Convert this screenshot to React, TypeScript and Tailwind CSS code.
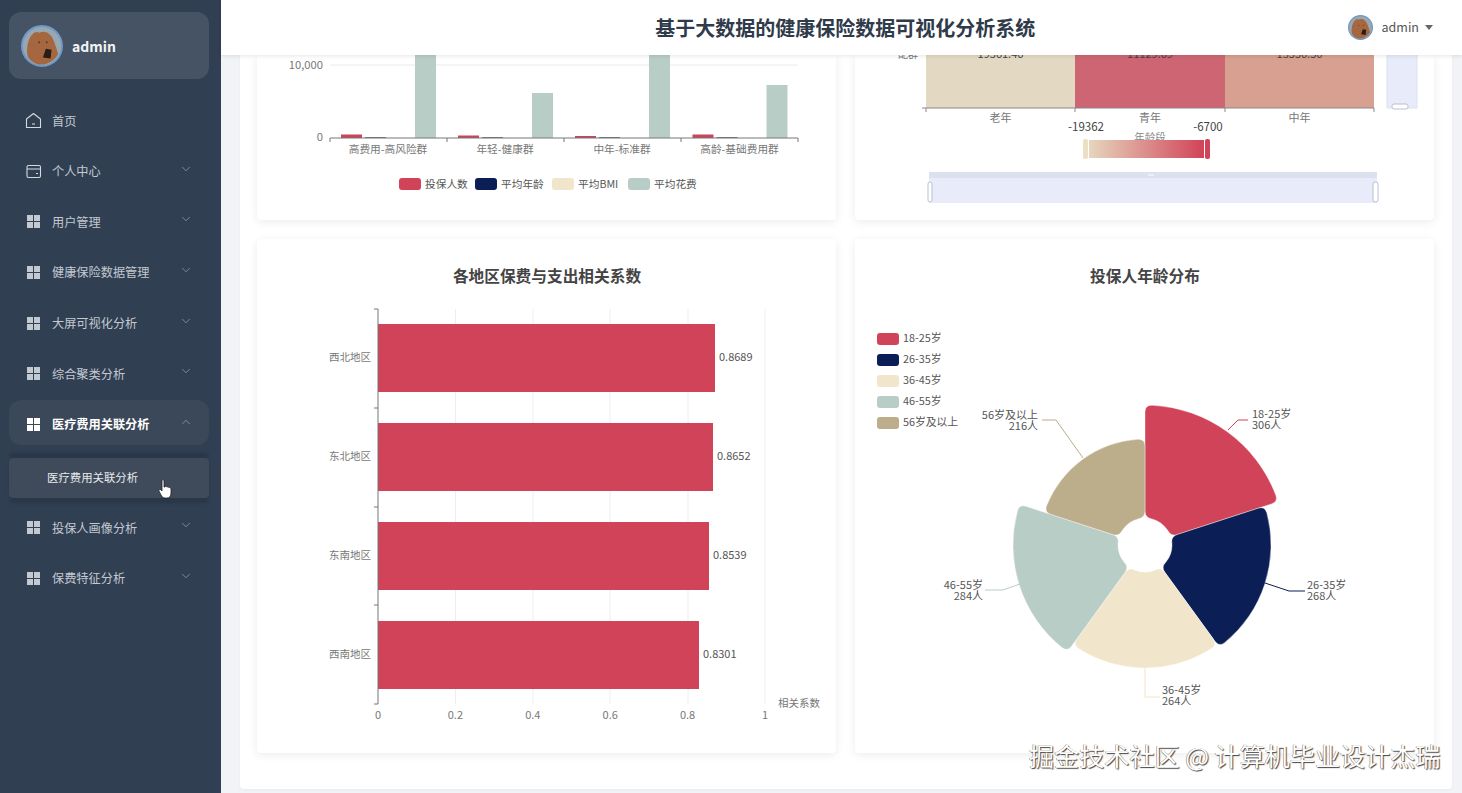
import { ChevronDown, ChevronUp } from "lucide-react";

const FONT = "'Noto Sans CJK SC', 'Noto Sans', sans-serif";

const menu = [
  { label: "首页", icon: "home" },
  { label: "个人中心", icon: "card", arrow: true },
  { label: "用户管理", arrow: true },
  { label: "健康保险数据管理", arrow: true },
  { label: "大屏可视化分析", arrow: true },
  { label: "综合聚类分析", arrow: true },
  { label: "医疗费用关联分析", arrow: true, open: true },
  { label: "投保人画像分析", arrow: true },
  { label: "保费特征分析", arrow: true },
];

function polar(r: number, deg: number) {
  const a = (deg * Math.PI) / 180;
  return [1145 - 855 + r * Math.sin(a), 306 + -r * Math.cos(a)];
}

function sector(r0: number, r: number, a0: number, a1: number, c: number) {
  const d = (c / r) * (180 / Math.PI);
  const d0 = (c / r0) * (180 / Math.PI);
  const p = (rr: number, aa: number) => polar(rr, aa).map((n) => n.toFixed(2)).join(" ");
  return [
    `M ${p(r0 + c, a0)}`,
    `L ${p(r - c, a0)}`,
    `Q ${p(r, a0)} ${p(r, a0 + d)}`,
    `A ${r} ${r} 0 0 1 ${p(r, a1 - d)}`,
    `Q ${p(r, a1)} ${p(r - c, a1)}`,
    `L ${p(r0 + c, a1)}`,
    `Q ${p(r0, a1)} ${p(r0, a1 - d0)}`,
    `A ${r0} ${r0} 0 0 0 ${p(r0, a0 + d0)}`,
    `Q ${p(r0, a0)} ${p(r0 + c, a0)}`,
    "Z",
  ].join(" ");
}

function Bear({ size }: { size: number }) {
  return (
    <svg width={size} height={size} viewBox="0 0 44 44">
      <circle cx="22" cy="22" r="21" fill="#9aa6b0" stroke="#6a9aca" strokeWidth="2" />
      <path
        d="M7 33 C5 24 8 13 12 10 C14 7 17 7 19 8 C23 6 28 7 30 10 C34 13 36 22 39 30 C35 38 27 41.5 21 41.5 C15 41.5 10 38 7 33 Z"
        fill="#a5673f"
      />
      <path d="M23 34 L26 25 L32 26 L31 35 Z" fill="#2a1d18" />
      <circle cx="19" cy="18" r="1" fill="#5c3520" />
      <circle cx="27" cy="18" r="1" fill="#5c3520" />
    </svg>
  );
}

function MenuIcon({ name }: { name?: string }) {
  if (name === "home") {
    return (
      <svg width="17" height="17" viewBox="0 0 17 17" fill="none" stroke="#d5d9de" strokeWidth="1.1" className="mr-[10px]">
        <path d="M8.5 1.5 L15.5 7 V15.5 H1.5 V7 Z" strokeLinejoin="round" />
        <path d="M7 12 H10" />
      </svg>
    );
  }
  if (name === "card") {
    return (
      <svg width="17" height="15" viewBox="0 0 17 15" fill="none" stroke="#d5d9de" strokeWidth="1.1" className="mr-[10px]">
        <rect x="2" y="1.5" width="13.5" height="12" rx="1.5" />
        <path d="M2 5 H15.5 M11 9.5 H13" />
      </svg>
    );
  }
  return (
    <svg width="17" height="13" viewBox="0 0 17 13" fill="currentColor" className="mr-[10px]">
      <rect x="2" y="0" width="6" height="6" />
      <rect x="9" y="0" width="6" height="6" />
      <rect x="2" y="7" width="6" height="6" />
      <rect x="9" y="7" width="6" height="6" />
    </svg>
  );
}

function Sidebar() {
  return (
    <aside className="w-[221px] shrink-0 bg-[#313f53] pl-[9px] pr-3 pt-3">
      <div className="mb-[16.4px] flex h-[67px] items-center gap-[9px] rounded-xl bg-[#465364] pl-3">
        <Bear size={42} />
        <span className="text-sm font-bold text-[#f1f3f5]">admin</span>
      </div>
      <nav>
        {menu.map((m) => (
          <div key={m.label}>
            <div className={`relative flex h-[50.6px] items-center ${m.open ? "isolate" : ""}`}>
              {m.open && <div className="absolute inset-x-0 bottom-[5px] top-[1px] -z-10 rounded-xl bg-[#3b4859]" />}
              <div
                className={`flex h-full w-full items-center pl-4 pr-4 ${
                  m.open ? "font-bold text-white" : "text-[#c3c9d1]"
                }`}
              >
                <MenuIcon name={m.icon} />
                <span className="flex-1 text-[12.2px]">{m.label}</span>
                {m.arrow &&
                  (m.open ? (
                    <ChevronUp size={14} className="mb-[5px] text-[#aab2bc]" strokeWidth={1.1} />
                  ) : (
                    <ChevronDown size={14} className="mb-[5px] text-[#aab2bc]" strokeWidth={1.1} />
                  ))}
              </div>
            </div>
            {m.open && (
              <div className="relative mb-[4.5px] mt-[8.5px] flex h-10 items-center rounded-sm bg-[#3f4a5a] pl-[38px] text-[11.4px] text-[#e8eaed] shadow-[0_-6px_3px_-1px_#2a3749,0_6px_3px_-1px_#2a3749]">
                医疗费用关联分析
                <svg className="absolute left-[149px] top-[21px]" width="14" height="20" viewBox="0 0 14 20">
                  <path
                    d="M4 1.5 C4 .6 6 .6 6 1.5 V8 L7 8 C7.5 6.8 9 7 9 8.2 C9.6 7.4 11 7.6 11 8.8 C11.8 8.2 13 8.6 13 10 V14 C13 17 11.5 19 9 19 H7 C5 19 4 17.6 3 16 L1 12 C.4 10.6 2 9.8 3 11 L4 12 Z"
                    fill="#fff"
                    stroke="#222"
                    strokeWidth="0.8"
                  />
                </svg>
              </div>
            )}
          </div>
        ))}
      </nav>
    </aside>
  );
}

function GroupChart() {
  const groups = [
    { x: 0, name: "高费用-高风险群", red: 3.5, sage: 90 },
    { x: 117, name: "年轻-健康群", red: 2.5, sage: 45 },
    { x: 234, name: "中年-标准群", red: 2, sage: 90 },
    { x: 351.5, name: "高龄-基础费用群", red: 3.5, sage: 53 },
  ];
  const legend = [
    { x: 142, c: "#d14358", t: "投保人数" },
    { x: 218, c: "#0b1f56", t: "平均年龄" },
    { x: 295, c: "#f1e6cb", t: "平均BMI" },
    { x: 371, c: "#b9cdc7", t: "平均花费" },
  ];
  return (
    <svg width="579" height="165" viewBox="0 55 579 165" style={{ fontFamily: FONT }} className="block">
      <line x1="73" x2="541" y1="65" y2="65" stroke="#e8eaec" />
      <text x="66" y="69" fontSize="11.2" fill="#777" textAnchor="end">10,000</text>
      <text x="66" y="141" fontSize="11.2" fill="#777" textAnchor="end">0</text>
      {groups.map((g) => (
        <g key={g.name}>
          <rect x={84 + g.x} y={138 - g.red} width="21" height={g.red} fill="#c9455a" />
          <rect x={108 + g.x} y="137" width="21" height="1" fill="#6b7280" />
          <rect x={158 + g.x} y={138 - g.sage} width="21" height={g.sage} fill="#b9cdc7" />
          <text x={131 + g.x} y="153" fontSize="10.7" fill="#777" textAnchor="middle">{g.name}</text>
        </g>
      ))}
      <line x1="73" x2="541" y1="138" y2="138" stroke="#777" />
      {[73, 190, 307, 424, 541].map((x) => (
        <line key={x} x1={x} x2={x} y1="138" y2="142" stroke="#777" />
      ))}
      {legend.map((l) => (
        <g key={l.t}>
          <rect x={l.x} y="178" width="22" height="12" rx="3" fill={l.c} />
          <text x={l.x + 26} y="187.5" fontSize="10.7" fill="#555">{l.t}</text>
        </g>
      ))}
    </svg>
  );
}

function HeatChart() {
  const cells = [
    { x: 71, w: 149, c: "#e3d8c2", v: "19361.46", l: "老年" },
    { x: 220, w: 150, c: "#cd6672", v: "11129.69", l: "青年" },
    { x: 370, w: 149, c: "#d8a090", v: "13556.56", l: "中年" },
  ];
  return (
    <svg width="579" height="165" viewBox="0 55 579 165" style={{ fontFamily: FONT }} className="block">
      <defs>
        <linearGradient id="heat" x1="0" x2="1" y1="0" y2="0">
          <stop offset="0" stopColor="#e6d6bd" />
          <stop offset="1" stopColor="#d14358" />
        </linearGradient>
      </defs>
      <text x="53" y="58" fontSize="10" fill="#777" textAnchor="middle">配群</text>
      {cells.map((c) => (
        <g key={c.l}>
          <rect x={c.x} y="40" width={c.w} height="68" fill={c.c} />
          <text x={c.x + c.w / 2} y="58" fontSize="11" fill="#444" textAnchor="middle">{c.v}</text>
          <text x={c.x + c.w / 2} y="122" fontSize="11" fill="#777" textAnchor="middle">{c.l}</text>
        </g>
      ))}
      <line x1="67" x2="519" y1="108" y2="108" stroke="#888" />
      {[71, 220, 370, 519].map((x) => (
        <line key={x} x1={x} x2={x} y1="108" y2="112" stroke="#888" />
      ))}
      <rect x="532" y="40" width="30" height="68" fill="#e8ecfa" stroke="#dde2f0" />
      <rect x="537" y="104" width="16" height="5" rx="2" fill="#fff" stroke="#b8c0d0" />
      <text x="231" y="131" fontSize="11.5" fill="#444" textAnchor="middle">-19362</text>
      <text x="353" y="131" fontSize="11.5" fill="#444" textAnchor="middle">-6700</text>
      <text x="295" y="141" fontSize="10.5" fill="#888" textAnchor="middle">年龄段</text>
      <rect x="234" y="140" width="115" height="18" fill="url(#heat)" />
      <rect x="228" y="139" width="5" height="20" rx="2" fill="#ebe0c6" />
      <rect x="350" y="139" width="5" height="20" rx="2" fill="#d14358" />
      <rect x="74" y="172" width="448" height="31" fill="#e8ebfa" />
      <rect x="74" y="172" width="448" height="6" fill="#dde1ef" />
      <rect x="293" y="174" width="6" height="2" fill="#eef0f7" />
      <rect x="73" y="182" width="4" height="20" rx="2" fill="#fff" stroke="#b8c0d0" />
      <rect x="518" y="182" width="5" height="20" rx="2" fill="#fff" stroke="#b8c0d0" />
    </svg>
  );
}

function BarChart() {
  const bars = [
    { y: 85, x2: 458, n: "西北地区", v: "0.8689" },
    { y: 184, x2: 456, n: "东北地区", v: "0.8652" },
    { y: 283, x2: 452, n: "东南地区", v: "0.8539" },
    { y: 382, x2: 442, n: "西南地区", v: "0.8301" },
  ];
  return (
    <svg width="579" height="514" style={{ fontFamily: FONT }} className="block">
      <text x="290" y="43" fontSize="15.7" fontWeight="700" fill="#444" textAnchor="middle">
        各地区保费与支出相关系数
      </text>
      {[198.5, 276, 353, 431, 508].map((x) => (
        <line key={x} x1={x} x2={x} y1="70" y2="465" stroke="#eceef0" />
      ))}
      {bars.map((b) => (
        <g key={b.n}>
          <rect x="121" y={b.y} width={b.x2 - 121} height="68" fill="#d14358" />
          <text x={b.x2 + 4} y={b.y + 37} fontSize="11" fill="#555">{b.v}</text>
          <text x="114" y={b.y + 37} fontSize="10.5" fill="#777" textAnchor="end">{b.n}</text>
        </g>
      ))}
      <line x1="121" x2="121" y1="70" y2="465" stroke="#777" />
      {[70, 169, 268, 366, 465].map((y) => (
        <line key={y} x1="117" x2="121" y1={y} y2={y} stroke="#777" />
      ))}
      {["0", "0.2", "0.4", "0.6", "0.8", "1"].map((t, i) => (
        <text key={t} x={121 + i * 77.4} y="480" fontSize="11" fill="#777" textAnchor="middle">{t}</text>
      ))}
      <text x="521" y="468" fontSize="10.5" fill="#777">相关系数</text>
    </svg>
  );
}

function PieChart() {
  const slices = [
    { r: 140, a: 0, c: "#d14358" },
    { r: 126, a: 72, c: "#0b1f56" },
    { r: 123, a: 144, c: "#f1e6cb" },
    { r: 132, a: 216, c: "#b9cdc7" },
    { r: 106, a: 288, c: "#bdae8b" },
  ];
  const legend = [
    { t: "18-25岁", c: "#d14358" },
    { t: "26-35岁", c: "#0b1f56" },
    { t: "36-45岁", c: "#f1e6cb" },
    { t: "46-55岁", c: "#b9cdc7" },
    { t: "56岁及以上", c: "#bdae8b" },
  ];
  const labels = [
    { x: 397, y: 179, a: "start", t: "18-25岁", n: "306人", c: "#d14358", pts: "373,191 383,181 393,181" },
    { x: 452, y: 350, a: "start", t: "26-35岁", n: "268人", c: "#0b1f56", pts: "410,344 434,352 450,352" },
    { x: 307, y: 455, a: "start", t: "36-45岁", n: "264人", c: "#f1e6cb", pts: "290,429 290,458 305,458" },
    { x: 128, y: 350, a: "end", t: "46-55岁", n: "284人", c: "#b9cdc7", pts: "165,345 148,351 130,351" },
    { x: 183, y: 179.5, a: "end", t: "56岁及以上", n: "216人", c: "#bdae8b", pts: "228,219 201,181 187,181" },
  ];
  return (
    <svg width="579" height="514" style={{ fontFamily: FONT }} className="block">
      <text x="290" y="43" fontSize="15.7" fontWeight="700" fill="#444" textAnchor="middle">
        投保人年龄分布
      </text>
      {legend.map((l, i) => (
        <g key={l.t}>
          <rect x="22" y={94 + i * 21} width="22" height="12" rx="3" fill={l.c} />
          <text x="48" y={103 + i * 21} fontSize="10.8" fill="#555">{l.t}</text>
        </g>
      ))}
      {slices.map((s) => (
        <path key={s.a} d={sector(27, s.r, s.a, s.a + 72, 7)} fill={s.c} stroke="#fff" strokeWidth="0.4" />
      ))}
      {labels.map((l) => (
        <g key={l.t}>
          <polyline points={l.pts} fill="none" stroke={l.c} />
          <text x={l.x} y={l.y} fontSize="11" fill="#555" textAnchor={l.a as "start" | "end"}>{l.t}</text>
          <text x={l.x} y={l.y + 11} fontSize="11" fill="#555" textAnchor={l.a as "start" | "end"}>{l.n}</text>
        </g>
      ))}
    </svg>
  );
}

export default function App() {
  return (
    <div
      className="relative flex h-[793px] w-[1462px] overflow-hidden bg-[#f1f3f6]"
      style={{ fontFamily: FONT }}
    >
      <Sidebar />
      <div className="flex min-w-0 flex-1 flex-col">
        <header className="relative z-10 flex h-[55px] shrink-0 items-center bg-white pr-[29px] shadow-[0_1px_4px_rgba(0,0,0,0.1)]">
          <h1 className="flex-1 pl-[122px] text-center text-[20px] font-bold text-[#2f3a4a]">
            基于大数据的健康保险数据可视化分析系统
          </h1>
          <div className="flex items-center gap-[9px]">
            <Bear size={25} />
            <span className="text-[12.5px] text-[#555]">admin</span>
            <span className="-ml-[3px] h-0 w-0 border-x-[4px] border-t-[5px] border-x-transparent border-t-[#666]" />
          </div>
        </header>
        <main className="ml-[19px] mr-[10px] h-[734px] rounded-b bg-white px-[17px] shadow-[0_1px_3px_rgba(0,0,0,0.04)]">
          <div className="grid grid-cols-[579px_579px] gap-[19px]">
            <section className="h-[165px] overflow-hidden rounded-b bg-white shadow-[0_2px_10px_rgba(0,0,0,0.08)]">
              <GroupChart />
            </section>
            <section className="h-[165px] overflow-hidden rounded-b bg-white shadow-[0_2px_10px_rgba(0,0,0,0.08)]">
              <HeatChart />
            </section>
            <section className="h-[514px] rounded bg-white shadow-[0_2px_10px_rgba(0,0,0,0.08)]">
              <BarChart />
            </section>
            <section className="h-[514px] rounded bg-white shadow-[0_2px_10px_rgba(0,0,0,0.08)]">
              <PieChart />
            </section>
          </div>
        </main>
      </div>
      <div className="absolute left-[1029px] top-[739px] whitespace-nowrap text-[25.1px] leading-8 text-white [text-shadow:1px_1px_1px_#444,-0.5px_-0.5px_0.5px_#777]">
        掘金技术社区 @ 计算机毕业设计杰瑞
      </div>
    </div>
  );
}
